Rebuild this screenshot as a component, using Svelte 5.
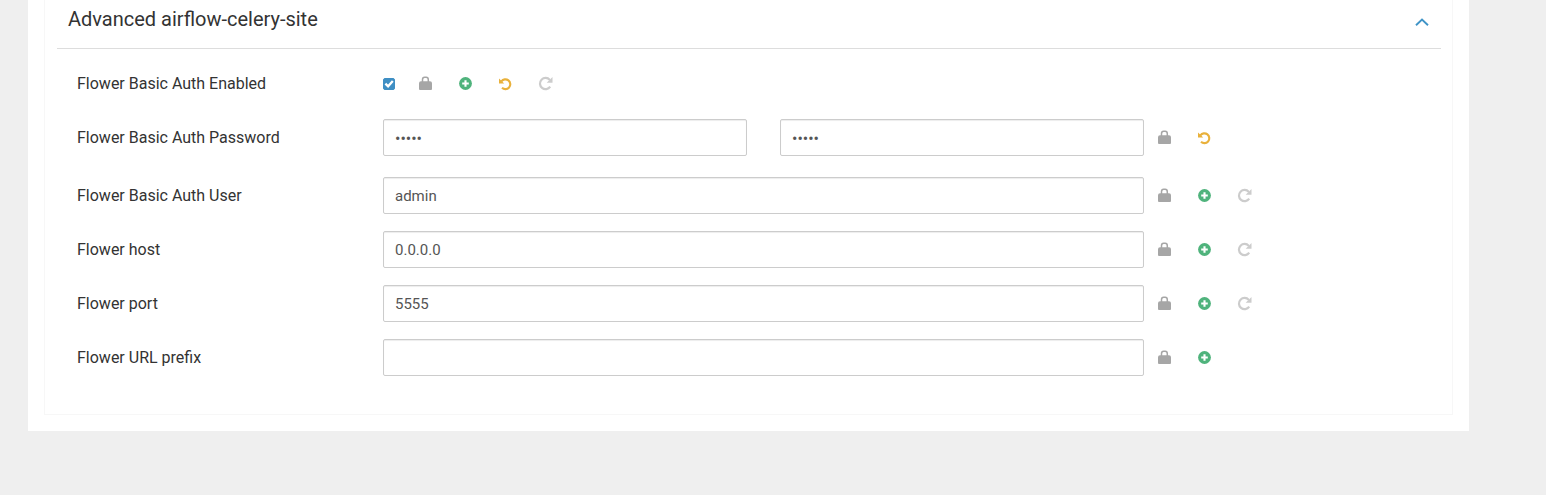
<script>
  let open = true;

  let properties = [
    { id: 'auth-enabled', label: 'Flower Basic Auth Enabled', type: 'checkbox', value: true, actions: ['lock', 'add', 'undo', 'redo'] },
    { id: 'auth-password', label: 'Flower Basic Auth Password', type: 'password', value: 'admin', retype: 'admin', actions: ['lock', 'undo'] },
    { id: 'auth-user', label: 'Flower Basic Auth User', type: 'text', value: 'admin', actions: ['lock', 'add', 'redo'] },
    { id: 'host', label: 'Flower host', type: 'text', value: '0.0.0.0', actions: ['lock', 'add', 'redo'] },
    { id: 'port', label: 'Flower port', type: 'text', value: '5555', actions: ['lock', 'add', 'redo'] },
    { id: 'url-prefix', label: 'Flower URL prefix', type: 'text', value: '', actions: ['lock', 'add'] }
  ];

  const titles = { lock: 'Final', add: 'Override', undo: 'Undo', redo: 'Set recommended' };
</script>

{#snippet actionButtons(actions)}
  <div class="actions">
    {#each actions as action}
      <button type="button" class="action {action}" aria-label={titles[action]}>
        <svg viewBox="0 0 13 13" width="13" height="13" aria-hidden="true">
          {#if action === 'lock'}
            <path d="M3.5 5V2.8Q3.5.3 5.6.3h1.6q2.1 0 2.1 2.5V5" fill="none" stroke="currentColor" stroke-width="1.5" />
            <path d="M2 4.2h9q2 .2 2 2V12q0 1-1 1H1q-1 0-1-1V6.2q0-1.800 2-2z" fill="currentColor" />
          {:else if action === 'add'}
            <circle cx="6.5" cy="6.5" r="6.4" fill="currentColor" />
            <path d="M6.5 3.2v6.6M3.2 6.5h6.600" stroke="#fff" stroke-width="2.1" />
          {:else if action === 'undo'}
            <path d="M2.4 4.4A4.9 4.9 0 1 1 3 10.8" fill="none" stroke="currentColor" stroke-width="2.1" />
            <path d="M0 1.500v4.900h5.200z" fill="currentColor" />
          {:else}
            <path d="M10.800 2.900A5.600 5.600 0 1 0 11.200 9.700" fill="none" stroke="currentColor" stroke-width="2.200" />
            <path d="M13.500 0v5.800H7.700z" fill="currentColor" />
          {/if}
        </svg>
      </button>
    {/each}
  </div>
{/snippet}

<main class="page">
  <section class="panel">
    <header class="panel-header">
      <h2>Advanced airflow-celery-site</h2>
      <button type="button" class="toggle" aria-label="Toggle section" aria-expanded={open} on:click={() => (open = !open)}>
        <svg viewBox="0 0 14 8" width="14" height="8" aria-hidden="true">
          <path d="M1 7.2l6-5.7 6 5.7" fill="none" stroke="currentColor" stroke-width="1.9" />
        </svg>
      </button>
    </header>

    {#if open}
      <form class="properties">
        {#each properties as property}
          <div class="property {property.type}">
            <label for={property.id}>{property.label}</label>
            {#if property.type === 'checkbox'}
              <div class="inline">
                <span class="check">
                  <input id={property.id} type="checkbox" bind:checked={property.value} />
                  <svg viewBox="0 0 12 12" width="12" height="12" aria-hidden="true">
                    <path d="M2.4 5.6l2.700 2.700 4.700-5.300" fill="none" stroke="#fff" stroke-width="2.300" />
                  </svg>
                </span>
                {@render actionButtons(property.actions)}
              </div>
            {:else}
              <div class="fields">
                <input id={property.id} type={property.type} bind:value={property.value} autocomplete="off" />
                {#if property.type === 'password'}
                  <input type="password" aria-label="Retype password" bind:value={property.retype} autocomplete="off" />
                {/if}
              </div>
              {@render actionButtons(property.actions)}
            {/if}
          </div>
        {/each}
      </form>
    {/if}
  </section>
</main>

<style>
  :global(body) {
    background: #efefef;
    color: #333;
    font-family: Roboto, sans-serif;
  }

  .page {
    margin: 0 77px 64px 28px;
    padding: 0 16px 16px;
    background: #fff;
  }

  .panel {
    padding: 0 11px 38px 12px;
    border: 1px solid #f7f7f7;
    border-top: none;
  }

  .panel-header {
    display: flex;
    align-items: center;
    justify-content: space-between;
    padding: 0 12px 10px 11px;
    height: 38px;
    border-bottom: 1px solid #ddd;
  }

  h2 {
    margin: 0;
    font-size: 20px;
    font-weight: 400;
    line-height: 38px;
  }

  button {
    display: block;
    padding: 0;
    border: none;
    background: none;
    cursor: pointer;
  }

  svg {
    display: block;
    overflow: visible;
  }

  .toggle {
    padding-top: 6px;
    color: #3f94c7;
  }

  .properties {
    display: flex;
    flex-direction: column;
    gap: 17px;
    padding: 16px 0 0 20px;
  }

  .property {
    display: grid;
    grid-template-columns: 306px minmax(0, 1fr) 283px;
    align-items: center;
    min-height: 37px;
  }

  .property.password {
    margin-bottom: 4px;
  }

  label {
    font-size: 16px;
    line-height: 20px;
  }

  .fields {
    display: flex;
    gap: 33px;
    margin-right: 14px;
  }

  .fields input {
    box-sizing: border-box;
    flex: 1;
    min-width: 0;
    height: 37px;
    padding: 1px 11px 0;
    border: 1px solid #ccc;
    border-radius: 2px;
    box-shadow: inset 0 1px 1px rgba(0, 0, 0, 0.075);
    background: #fff;
    color: #555;
    font-family: inherit;
    font-size: 15px;
  }

  .fields input[type='password'] {
    font-size: 16px;
  }

  .inline {
    display: flex;
    align-items: center;
    gap: 24px;
  }

  .check {
    display: grid;
  }

  .check input,
  .check svg {
    grid-area: 1 / 1;
  }

  .check input {
    appearance: none;
    width: 12px;
    height: 12px;
    margin: 0;
    border: 1px solid #3f8fc4;
    border-radius: 2px;
  }

  .check input:checked {
    background: #3f8fc4;
  }

  .check svg {
    pointer-events: none;
  }

  .actions {
    display: flex;
    gap: 27px;
  }

  .lock {
    color: #a6a6a6;
  }

  .add {
    color: #4fb37c;
  }

  .undo {
    color: #e9b13b;
  }

  .redo {
    color: #ccc;
  }
</style>
